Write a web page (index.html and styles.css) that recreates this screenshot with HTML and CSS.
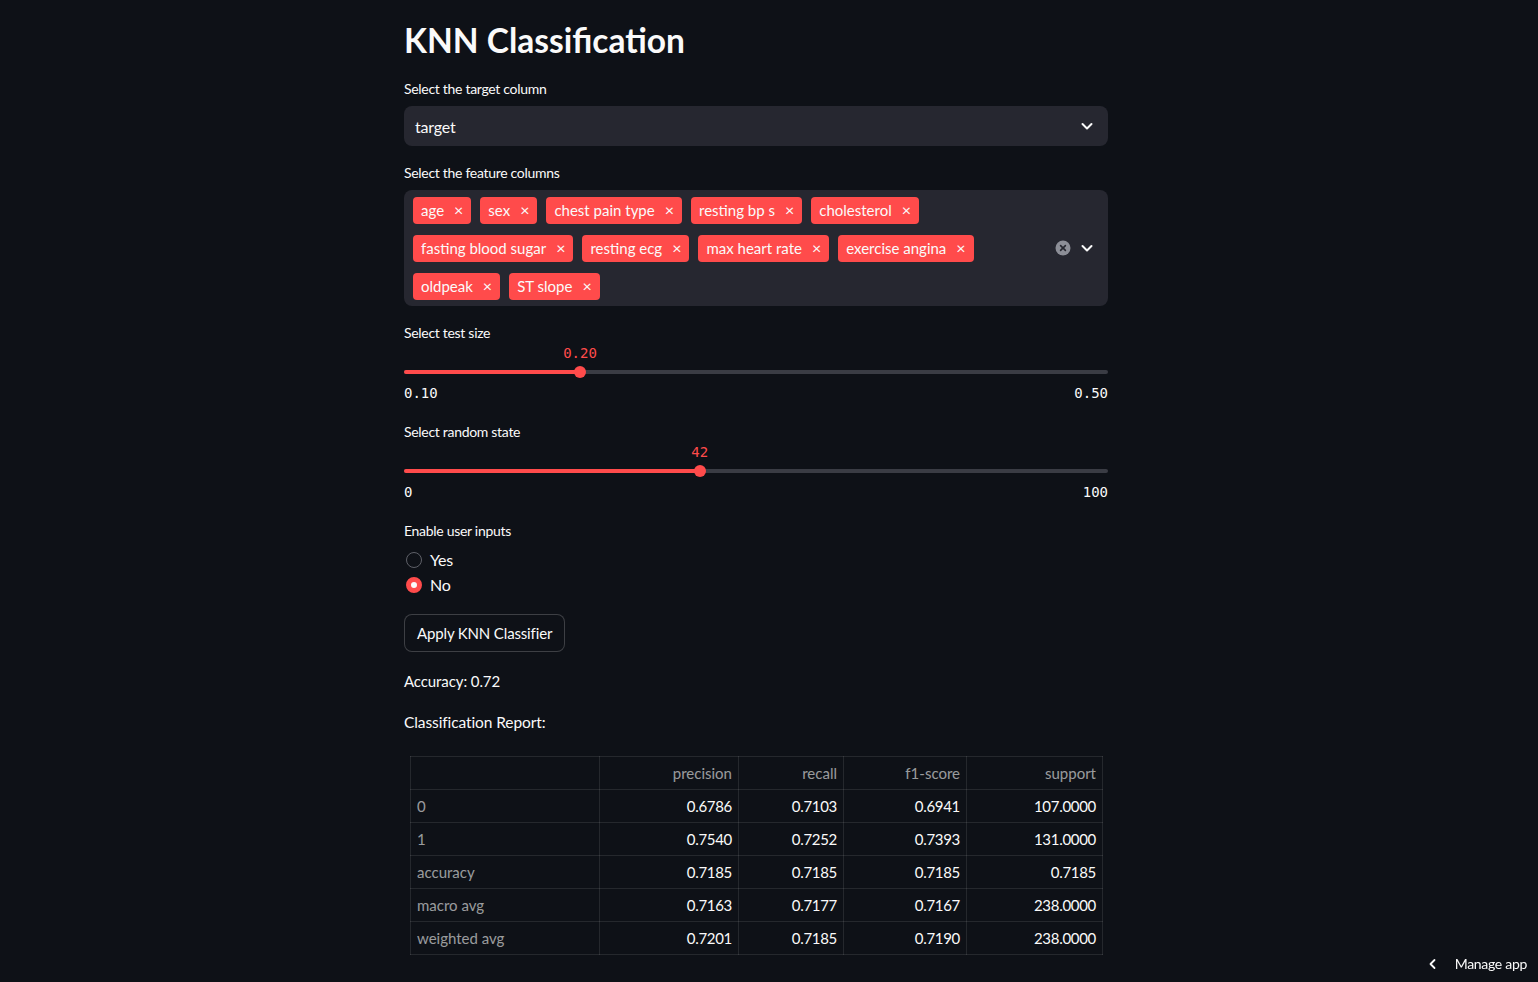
FILE: index.html
```html
<!DOCTYPE html>
<html lang="en">
<head>
<meta charset="utf-8">
<title>KNN Classification</title>
<link rel="stylesheet" href="styles.css">
</head>
<body>
<main class="main">
  <h1 class="title">KNN Classification</h1>

  <section class="widget">
    <div class="label">Select the target column</div>
    <div class="select">
      <span class="select-value">target</span>
      <svg class="chevron" width="16" height="16" viewBox="0 0 16 16"><path d="M3.5 6l4.5 4.5L12.5 6" fill="none" stroke="#fafafa" stroke-width="2" stroke-linecap="round" stroke-linejoin="round"/></svg>
    </div>
  </section>

  <section class="widget">
    <div class="label">Select the feature columns</div>
    <div class="multiselect">
      <div class="tags">
        <span class="tag">age<span class="x">×</span></span>
        <span class="tag">sex<span class="x">×</span></span>
        <span class="tag">chest pain type<span class="x">×</span></span>
        <span class="tag">resting bp s<span class="x">×</span></span>
        <span class="tag">cholesterol<span class="x">×</span></span>
        <span class="tag">fasting blood sugar<span class="x">×</span></span>
        <span class="tag">resting ecg<span class="x">×</span></span>
        <span class="tag">max heart rate<span class="x">×</span></span>
        <span class="tag">exercise angina<span class="x">×</span></span>
        <span class="tag">oldpeak<span class="x">×</span></span>
        <span class="tag">ST slope<span class="x">×</span></span>
      </div>
      <div class="ms-icons">
        <svg width="16" height="16" viewBox="0 0 16 16"><circle cx="8" cy="8" r="7.5" fill="#8c8e97"/><path d="M5.6 5.6l4.8 4.8M10.4 5.6l-4.8 4.8" stroke="#262730" stroke-width="1.6" stroke-linecap="round"/></svg>
        <svg width="16" height="16" viewBox="0 0 16 16"><path d="M3.5 6l4.5 4.5L12.5 6" fill="none" stroke="#fafafa" stroke-width="2" stroke-linecap="round" stroke-linejoin="round"/></svg>
      </div>
    </div>
  </section>

  <section class="widget slider-widget">
    <div class="label">Select test size</div>
    <div class="slider">
      <div class="slider-value" style="left:25%">0.20</div>
      <div class="track"><div class="fill" style="width:25%"></div><div class="thumb" style="left:25%"></div></div>
      <div class="ticks"><span>0.10</span><span>0.50</span></div>
    </div>
  </section>

  <section class="widget slider-widget">
    <div class="label">Select random state</div>
    <div class="slider">
      <div class="slider-value" style="left:42%">42</div>
      <div class="track"><div class="fill" style="width:42%"></div><div class="thumb" style="left:42%"></div></div>
      <div class="ticks"><span>0</span><span>100</span></div>
    </div>
  </section>

  <section class="widget radio-widget">
    <div class="label">Enable user inputs</div>
    <div class="radio-group">
      <div class="radio"><span class="dot"></span>Yes</div>
      <div class="radio checked"><span class="dot"></span>No</div>
    </div>
  </section>

  <button class="btn" type="button">Apply KNN Classifier</button>

  <p class="text accuracy">Accuracy: 0.72</p>
  <p class="text report">Classification Report:</p>

  <table class="report-table">
    <colgroup><col class="c0"><col class="c1"><col class="c2"><col class="c3"><col class="c4"></colgroup>
    <thead>
      <tr><th></th><th>precision</th><th>recall</th><th>f1-score</th><th>support</th></tr>
    </thead>
    <tbody>
      <tr><th>0</th><td>0.6786</td><td>0.7103</td><td>0.6941</td><td>107.0000</td></tr>
      <tr><th>1</th><td>0.7540</td><td>0.7252</td><td>0.7393</td><td>131.0000</td></tr>
      <tr><th>accuracy</th><td>0.7185</td><td>0.7185</td><td>0.7185</td><td>0.7185</td></tr>
      <tr><th>macro avg</th><td>0.7163</td><td>0.7177</td><td>0.7167</td><td>238.0000</td></tr>
      <tr><th>weighted avg</th><td>0.7201</td><td>0.7185</td><td>0.7190</td><td>238.0000</td></tr>
    </tbody>
  </table>
</main>

<div class="manage">
  <svg width="12" height="12" viewBox="0 0 12 12"><path d="M7.5 2L3.5 6l4 4" fill="none" stroke="#fafafa" stroke-width="1.8" stroke-linecap="round" stroke-linejoin="round"/></svg>
  <span>Manage app</span>
</div>
</body>
</html>
```
FILE: styles.css
```css
* { box-sizing: border-box; }

html, body {
  margin: 0;
  padding: 0;
  background: #0e1117;
  color: #fafafa;
  font-family: "Source Sans Pro", Lato, "Noto Sans", sans-serif;
  height: 100%;
  overflow: hidden;
}

.main {
  width: 704px;
  margin-left: 404px;
  padding-top: 14px;
}

.title {
  font-size: 33.5px;
  font-weight: 700;
  line-height: 52px;
  margin: 0 0 13px 0;
}

.widget { margin-bottom: 17px; }

.label {
  font-size: 14px;
  line-height: 20px;
  letter-spacing: -0.3px;
  margin-bottom: 7px;
}

.select {
  height: 40px;
  background: #262730;
  border-radius: 8px;
  display: flex;
  align-items: center;
  justify-content: space-between;
  padding: 0 13px 0 11px;
  font-size: 16px;
  letter-spacing: -0.2px;
}

.multiselect {
  background: #262730;
  border-radius: 8px;
  min-height: 116px;
  display: flex;
  align-items: center;
  padding: 6px 13px 6px 9px;
}

.tags {
  flex: 1;
  display: flex;
  flex-wrap: wrap;
  gap: 11px 9px;
}

.tag {
  background: #ff4b4b;
  color: #fafafa;
  height: 27px;
  border-radius: 4px;
  display: inline-flex;
  align-items: center;
  padding: 0 8px 1px;
  font-size: 15px;
}

.tag .x {
  margin-left: 10px;
  font-size: 16px;
  line-height: 1;
}

.ms-icons {
  display: flex;
  align-items: center;
  gap: 8px;
}

.slider-widget { margin-bottom: 19px; }
.slider-widget .label { margin-bottom: 0; }

.slider { position: relative; padding-top: 22px; }

.slider-value {
  position: absolute;
  top: 0;
  transform: translateX(-50%);
  font-family: "DejaVu Sans Mono", "Liberation Mono", monospace;
  font-size: 14px;
  line-height: 20px;
  color: #ff4b4b;
}

.track {
  position: relative;
  height: 4px;
  margin: 5px 0;
  background: #3a3c44;
  border-radius: 2px;
}

.fill {
  height: 100%;
  background: #ff4b4b;
  border-radius: 2px;
}

.thumb {
  position: absolute;
  top: 50%;
  width: 12px;
  height: 12px;
  border-radius: 50%;
  background: #ff4b4b;
  transform: translate(-50%, -50%);
}

.ticks {
  display: flex;
  justify-content: space-between;
  font-family: "DejaVu Sans Mono", "Liberation Mono", monospace;
  font-size: 14px;
  line-height: 20px;
  margin-top: 9px;
}

.radio-widget { margin-bottom: 17px; }
.radio-widget .label { margin-bottom: 6px; }

.radio {
  display: flex;
  align-items: center;
  height: 25px;
  font-size: 16px;
  letter-spacing: -0.2px;
}

.radio .dot {
  width: 16px;
  height: 16px;
  border-radius: 50%;
  border: 1px solid #5e6068;
  margin: 0 8px 0 2px;
}

.radio.checked .dot {
  border: 5px solid #ff4b4b;
  background: #fafafa;
}

.btn {
  display: block;
  height: 38px;
  padding: 0 12px;
  border-radius: 8px;
  border: 1px solid rgba(250, 250, 250, 0.2);
  background: #0e1117;
  color: #fafafa;
  font-family: inherit;
  font-size: 15px;
  letter-spacing: -0.15px;
}

.text {
  margin: 0;
  font-size: 15px;
  line-height: 24px;
  letter-spacing: -0.1px;
}

.accuracy { margin-top: 17px; }
.report { margin-top: 17px; font-size: 15.5px; }

.report-table {
  margin: 22px 0 0 6px;
  width: 692px;
  border-collapse: collapse;
  font-size: 15px;
  table-layout: fixed;
}

.c0 { width: 189px; }
.c1 { width: 139px; }
.c2 { width: 105px; }
.c3 { width: 123px; }
.c4 { width: 136px; }

.report-table th,
.report-table td {
  height: 33px;
  padding: 0 6px;
  border: 1px solid rgba(250, 250, 250, 0.1);
  font-weight: 400;
}

.report-table thead th {
  text-align: right;
  color: rgba(250, 250, 250, 0.6);
}

.report-table tbody th {
  text-align: left;
  color: rgba(250, 250, 250, 0.6);
}

.report-table td {
  text-align: right;
  color: #fafafa;
  letter-spacing: -0.3px;
}

.manage {
  position: fixed;
  right: 11px;
  bottom: 10px;
  display: flex;
  align-items: center;
  gap: 16px;
  font-size: 14px;
  letter-spacing: -0.3px;
  color: #fafafa;
}
```
